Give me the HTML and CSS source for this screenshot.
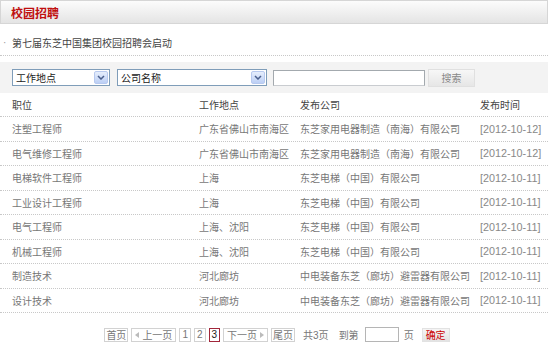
FILE: index.html
```html
<!DOCTYPE html>
<html lang="zh-CN">
<head>
<meta charset="utf-8">
<title>校园招聘</title>
<link rel="stylesheet" href="styles.css">
</head>
<body>
<div class="page">
  <div class="topbar"><span class="title">校园招聘</span></div>

  <div class="news"><span class="dot">·</span><span class="news-text">第七届东芝中国集团校园招聘会启动</span></div>

  <div class="search">
    <div class="sel sel-a"><span class="sel-text">工作地点</span><span class="sel-btn"><svg width="8" height="5" viewBox="0 0 8 5"><path d="M1 1 L4 4 L7 1" fill="none" stroke="#4a5f8c" stroke-width="1.5"/></svg></span></div>
    <div class="sel sel-b"><span class="sel-text">公司名称</span><span class="sel-btn"><svg width="8" height="5" viewBox="0 0 8 5"><path d="M1 1 L4 4 L7 1" fill="none" stroke="#4a5f8c" stroke-width="1.5"/></svg></span></div>
    <div class="kw"></div>
    <div class="btn-search">搜索</div>
  </div>

  <div class="list">
    <div class="row head"><span>职位</span><span>工作地点</span><span>发布公司</span><span>发布时间</span></div>
    <div class="row"><span>注塑工程师</span><span>广东省佛山市南海区</span><span>东芝家用电器制造（南海）有限公司</span><span class="date">[2012-10-12]</span></div>
    <div class="row"><span>电气维修工程师</span><span>广东省佛山市南海区</span><span>东芝家用电器制造（南海）有限公司</span><span class="date">[2012-10-12]</span></div>
    <div class="row"><span>电梯软件工程师</span><span>上海</span><span>东芝电梯（中国）有限公司</span><span class="date">[2012-10-11]</span></div>
    <div class="row"><span>工业设计工程师</span><span>上海</span><span>东芝电梯（中国）有限公司</span><span class="date">[2012-10-11]</span></div>
    <div class="row"><span>电气工程师</span><span>上海、沈阳</span><span>东芝电梯（中国）有限公司</span><span class="date">[2012-10-11]</span></div>
    <div class="row"><span>机械工程师</span><span>上海、沈阳</span><span>东芝电梯（中国）有限公司</span><span class="date">[2012-10-11]</span></div>
    <div class="row"><span>制造技术</span><span>河北廊坊</span><span>中电装备东芝（廊坊）避雷器有限公司</span><span class="date">[2012-10-11]</span></div>
    <div class="row"><span>设计技术</span><span>河北廊坊</span><span>中电装备东芝（廊坊）避雷器有限公司</span><span class="date">[2012-10-11]</span></div>
  </div>

  <div class="pager">
    <span class="pg">首页</span>
    <span class="pg pg-prev"><svg width="4" height="6" viewBox="0 0 4 6"><path d="M4 0 L0 3 L4 6 Z" fill="#bbb"/></svg>上一页</span>
    <span class="pg pg-num">1</span>
    <span class="pg pg-num">2</span>
    <span class="pg pg-num cur">3</span>
    <span class="pg pg-next">下一页<svg width="4" height="6" viewBox="0 0 4 6"><path d="M0 0 L4 3 L0 6 Z" fill="#bbb"/></svg></span>
    <span class="pg">尾页</span>
    <span class="total">共3页</span>
    <span class="goto">到第</span>
    <span class="pg-input"></span>
    <span class="unit">页</span>
    <span class="ok">确定</span>
  </div>
</div>
</body>
</html>
```

FILE: styles.css
```css
html, body {
  margin: 0;
  padding: 0;
  background: #fff;
}
body {
  font-family: "Liberation Sans", "Noto Sans CJK SC", sans-serif;
  font-size: 10px;
  color: #777;
}
.page {
  width: 548px;
}
.topbar {
  height: 22px;
  border: 1px solid #d6d6d6;
  background: linear-gradient(#fcfcfc, #e4e4e4);
  display: flex;
  align-items: center;
  padding-left: 10px;
}
.title {
  color: #c00f0f;
  font-weight: bold;
  font-size: 12px;
}
.news {
  height: 25px;
  padding-top: 6px;
  border-bottom: 1px dotted #c8c8c8;
  display: flex;
  align-items: center;
  color: #444;
}
.dot {
  width: 12px;
  padding-left: 3px;
  box-sizing: border-box;
  color: #999;
}
.search {
  margin-top: 6px;
  height: 31px;
  background: #f3f3f3;
  display: flex;
  align-items: center;
  padding-left: 12px;
}
.sel {
  height: 17px;
  box-sizing: border-box;
  border: 1px solid #7f9db9;
  background: #fff;
  display: flex;
  align-items: center;
  justify-content: space-between;
  color: #222;
}
.sel-a { width: 98px; }
.sel-b { width: 150px; margin-left: 7px; }
.sel-text { padding-left: 3px; }
.sel-btn {
  width: 14px;
  height: 13px;
  margin-right: 1px;
  box-sizing: border-box;
  border: 1px solid #b7c9ef;
  border-radius: 2px;
  background: linear-gradient(#e6eefc, #bccff5);
  display: flex;
  align-items: center;
  justify-content: center;
}
.kw {
  width: 152px;
  height: 16px;
  box-sizing: border-box;
  margin-left: 6px;
  border: 1px solid #a3a9ae;
  border-bottom-color: #c9ccd0;
  background: #fff;
}
.btn-search {
  width: 47px;
  height: 18px;
  margin-left: 3px;
  background: linear-gradient(#f7f7f7, #e6e6e6);
  border: 1px solid #e0e0e0;
  box-sizing: border-box;
  display: flex;
  align-items: center;
  justify-content: center;
  color: #888;
}
.list {
  display: flex;
  flex-direction: column;
}
.row {
  display: grid;
  grid-template-columns: 187px 101px 182px 1fr;
  height: 24.5px;
  box-sizing: border-box;
  border-bottom: 1px dotted #c8c8c8;
  align-items: center;
}
.row > span {
  padding-left: 12px;
  white-space: nowrap;
}
.row > span:nth-child(4) {
  padding-left: 10px;
}
.row.head {
  height: 24px;
  color: #444;
}
.date {
  font-size: 10.8px;
  color: #888;
}
.pager {
  margin-top: 14px;
  display: flex;
  align-items: center;
  justify-content: center;
  padding-left: 6px;
  color: #777;
}
.pg {
  height: 14px;
  box-sizing: border-box;
  border: 1px solid #d2d2d2;
  padding: 0 1px;
  display: flex;
  align-items: center;
  gap: 3px;
  margin-right: 3px;
  background: #fff;
}
.pg-prev { padding: 0 3px; }
.pg-next { padding: 0 3px; }
.pg-num { padding: 0 2px; }
.pg.cur {
  border-color: #a1263a;
  color: #222;
}
.total { margin-left: 5px; }
.goto { margin-left: 10px; }
.pg-input {
  width: 34px;
  height: 15px;
  box-sizing: border-box;
  border: 1px solid #b5b5b5;
  margin-left: 6px;
  background: #fff;
}
.unit { margin-left: 5px; }
.ok {
  margin-left: 8px;
  width: 28px;
  height: 14px;
  background: linear-gradient(#f5f5f5, #e3e3e3);
  border: 1px solid #e2e2e2;
  box-sizing: border-box;
  display: flex;
  align-items: center;
  justify-content: center;
  color: #c00;
}
```
